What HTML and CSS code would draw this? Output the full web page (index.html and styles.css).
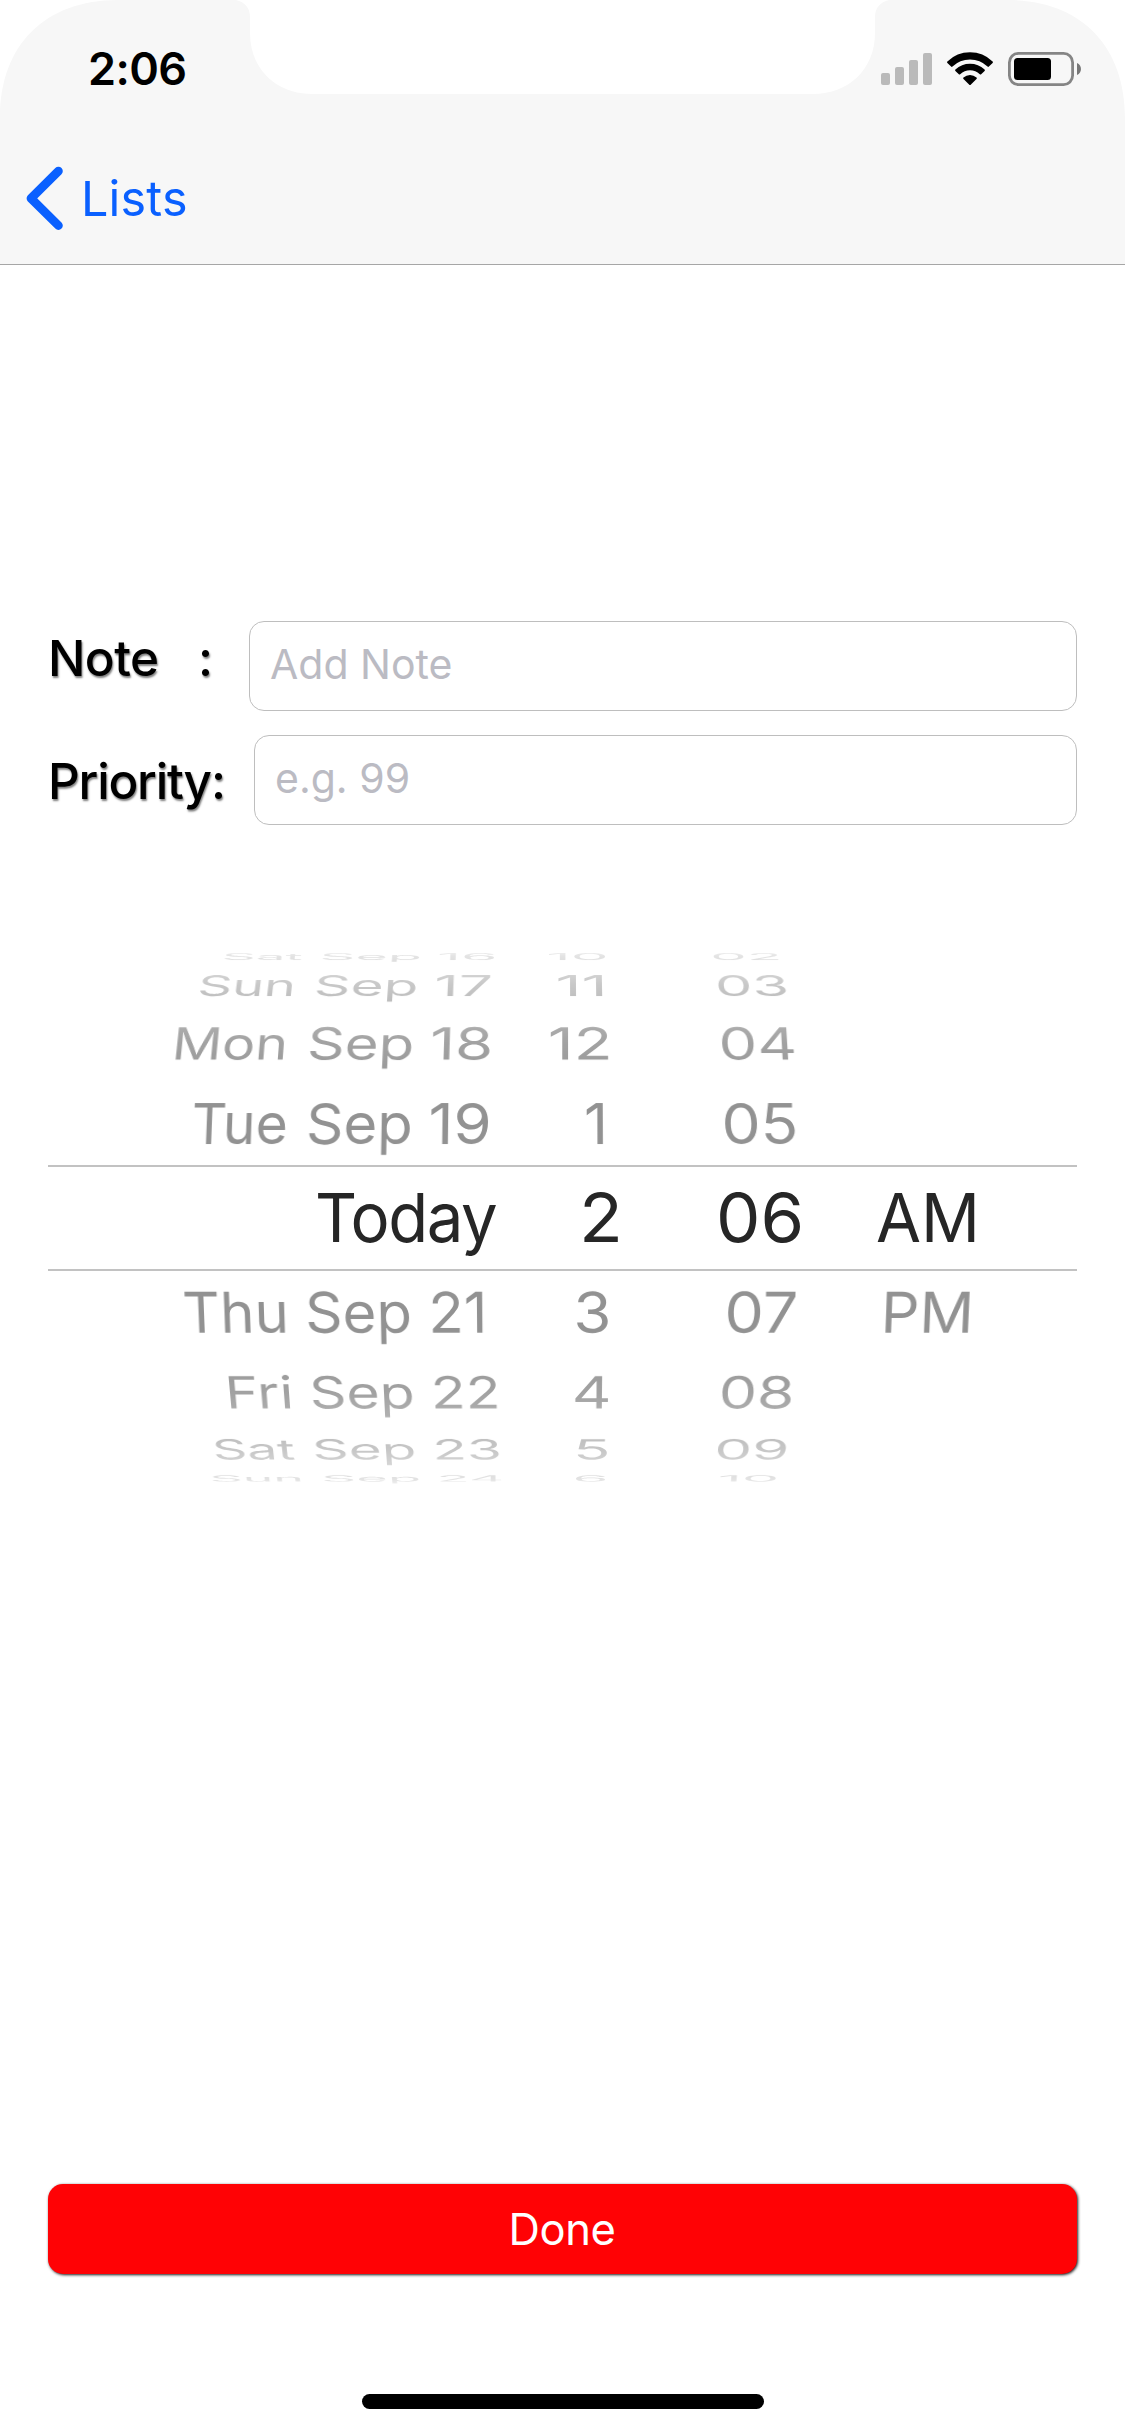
FILE: index.html
```html
<!DOCTYPE html>
<html lang="en">
<head>
<meta charset="utf-8">
<title>Add Note</title>
<link rel="stylesheet" href="styles.css">
</head>
<body>
<div class="screen">
  <header class="header">
    <svg class="header-shape" width="1125" height="264" viewBox="0 0 1125 264" aria-hidden="true">
      <path fill="#f7f7f7" d="M0 118C0 45 45 0 118 0H236C245 2 250 8 250 17V33C250 69 276 94 312 94H813C849 94 875 69 875 33V17C875 8 880 2 889 0H1007C1080 0 1125 45 1125 118V264H0Z"/>
    </svg>
    <div class="status-bar">
      <span class="clock">2:06</span>
      <div class="status-icons">
        <svg width="51" height="32" viewBox="0 0 51 32" fill="#bababa" aria-hidden="true">
          <rect x="0" y="20" width="9" height="12" rx="2"/>
          <rect x="14" y="14" width="9" height="18" rx="2"/>
          <rect x="28" y="7" width="9" height="25" rx="2"/>
          <rect x="42" y="0" width="9" height="32" rx="2"/>
        </svg>
        <svg class="wifi" width="46" height="33" viewBox="0 0 46 33" aria-hidden="true">
          <g fill="#000" stroke="#000" stroke-width="2" stroke-linejoin="round">
            <path d="M1.1 10.2A31.5 31.5 0 0 1 44.9 10.2L41.2 13.9A26.4 26.4 0 0 0 4.8 13.9Z"/>
            <path d="M9.1 18.2A20.4 20.4 0 0 1 36.9 18.2L33.5 21.4A15.4 15.4 0 0 0 12.5 21.4Z"/>
            <path d="M17.2 26.3A8.6 8.6 0 0 1 28.8 26.3L23 32Z"/>
          </g>
        </svg>
        <svg class="battery" width="73" height="34" viewBox="0 0 73 34" aria-hidden="true">
          <rect x="1.4" y="1.4" width="63.2" height="31.2" rx="9" fill="none" stroke="#858585" stroke-width="2.8"/>
          <rect x="6" y="6" width="37" height="22" rx="3.5" fill="#000"/>
          <path d="M69 11C74.3 13 74.3 21 69 23Z" fill="#777"/>
        </svg>
      </div>
    </div>
    <nav class="nav-bar">
      <a class="back">
        <svg width="38" height="64" viewBox="0 0 38 64" aria-hidden="true">
          <path d="M33.4 5.1L6 32.3L33.4 59.5" fill="none" stroke="#0a60ff" stroke-width="8.8" stroke-linecap="round" stroke-linejoin="round"/>
        </svg>
        <span>Lists</span>
      </a>
    </nav>
  </header>

  <main class="content">
    <form class="form">
      <div class="field note">
        <label for="note"><span class="label-text">Note</span><span>:</span></label>
        <input id="note" type="text" placeholder="Add Note">
      </div>
      <div class="field priority">
        <label for="priority">Priority:</label>
        <input id="priority" type="text" placeholder="e.g. 99">
      </div>
    </form>

    <section class="picker">
      <div class="row up4"><span><i>Sat</i> Sep <b>16</b></span><span>10</span><span>02</span></div>
      <div class="row up3"><span><i>Sun</i> Sep <b>17</b></span><span>11</span><span>03</span></div>
      <div class="row up2"><span><i>Mon</i> Sep <b>18</b></span><span>12</span><span>04</span></div>
      <div class="row up1"><span><i>Tue</i> Sep <b>19</b></span><span>1</span><span>05</span></div>
      <div class="row selected"><span>Today</span><span>2</span><span>06</span><span>AM</span></div>
      <div class="row down1"><span>Thu Sep 21</span><span>3</span><span>07</span><span>PM</span></div>
      <div class="row down2"><span>Fri Sep 22</span><span>4</span><span>08</span></div>
      <div class="row down3"><span><i>Sat</i> Sep 23</span><span>5</span><span>09</span></div>
      <div class="row down4"><span><i>Sun</i> Sep 24</span><span>6</span><span>10</span></div>
    </section>
  </main>

  <footer class="footer">
    <button class="done" type="button">Done</button>
    <div class="home-indicator"></div>
  </footer>
</div>
</body>
</html>
```
FILE: styles.css
```css
* {
  box-sizing: border-box;
}

body {
  margin: 0;
  background: #fff;
  font-family: Inter, "Liberation Sans", sans-serif;
}

.screen {
  display: flex;
  flex-direction: column;
  width: 1125px;
  height: 2436px;
  overflow: hidden;
}

/* Header */
.header {
  position: relative;
  height: 265px;
  border-bottom: 1px solid #a6a6a6;
}

.header-shape {
  position: absolute;
  top: 0;
  left: 0;
}

.status-bar,
.nav-bar {
  position: relative;
  display: flex;
  height: 132px;
}

.status-bar {
  justify-content: space-between;
  padding: 52px 44px 0 88px;
}

.clock {
  font-size: 45px;
  font-weight: 600;
  line-height: 34px;
  letter-spacing: -0.6px;
}

.status-icons {
  display: flex;
  align-items: flex-start;
}

.status-icons svg:first-child {
  margin-top: 1px;
}

.wifi {
  margin-left: 15px;
}

.battery {
  margin-left: 15px;
}

.back {
  display: flex;
  align-items: center;
  padding-left: 25px;
  color: #0a60ff;
  font-size: 48.5px;
}

.back span {
  margin-left: 18px;
  letter-spacing: 0.2px;
}

/* Form */
.content {
  padding: 356px 48px 0;
}

.form {
  display: flex;
  flex-direction: column;
  gap: 24px;
}

.field {
  display: flex;
  align-items: center;
  height: 90px;
}

.field label {
  display: flex;
  flex: none;
  font-size: 49.5px;
  font-weight: 450;
  line-height: 60px;
  letter-spacing: -1.2px;
  text-shadow: 1px 2px 2px rgba(0, 0, 0, 0.5);
}

.note label {
  width: 201px;
  margin-bottom: 17px;
  letter-spacing: -0.6px;
}

.label-text {
  width: 150px;
}

.priority label {
  width: 206px;
  margin-top: 1px;
}

.field input {
  flex: 1;
  min-width: 0;
  height: 90px;
  padding: 0 20px 4px;
  border: 1px solid #bebebe;
  border-radius: 15px;
  background: #fff;
  font: 41px Inter, "Liberation Sans", sans-serif;
  letter-spacing: 0;
}

.field input::placeholder {
  color: #bbbbc3;
  opacity: 1;
}

/* Date and time wheel */
.picker {
  margin-top: 121px;
  color: #929292;
  font-size: 57px;
  -webkit-mask-image: linear-gradient(transparent 0, rgba(0, 0, 0, 0.25) 10px, rgba(0, 0, 0, 0.5) 38px, rgba(0, 0, 0, 0.85) 96px, #000 150px, #000 394px, rgba(0, 0, 0, 0.85) 448px, rgba(0, 0, 0, 0.5) 506px, rgba(0, 0, 0, 0.25) 534px, transparent 544px);
  mask-image: linear-gradient(transparent 0, rgba(0, 0, 0, 0.25) 10px, rgba(0, 0, 0, 0.5) 38px, rgba(0, 0, 0, 0.85) 96px, #000 150px, #000 394px, rgba(0, 0, 0, 0.85) 448px, rgba(0, 0, 0, 0.5) 506px, rgba(0, 0, 0, 0.25) 534px, transparent 544px);
}

.row {
  display: grid;
  grid-template-columns: 370px 170px 160px 180px;
  grid-template-rows: 100%;
  align-items: center;
  padding-left: 122px;
  transform-origin: 512px 50%;
}

.row span {
  line-height: 1;
  white-space: nowrap;
  transform-origin: 0 50%;
  transform: translateX(var(--x)) scale(var(--sx), var(--sy, 1));
}

.row i,
.row b {
  display: inline-block;
  font-style: normal;
  font-weight: 400;
}

.row i {
  margin-right: -3px;
  transform: scaleX(0.95);
  transform-origin: 0 50%;
}

.row b {
  margin-left: 3px;
  transform: scaleX(1.06);
  transform-origin: 100% 50%;
}

.up4 { height: 20.8px; --sy: 0.152; transform: matrix3d(1, 0, 0, 0, 0, 1, 0, -0.0005, 0, 0, 1, 0, 0, 0, 0, 1); }
.up3 { height: 36.8px; --sy: 0.49; transform: matrix3d(1, 0, 0, 0, 0, 1, 0, -0.0004, 0, 0, 1, 0, 0, 0, 0, 1); }
.up2 { height: 78.2px; --sy: 0.78; transform: matrix3d(1, 0, 0, 0, 0, 1, 0, -0.00027, 0, 0, 1, 0, 0, 0, 0, 1); }
.up1 { height: 83.2px; --sy: 0.985; transform: matrix3d(1, 0, 0, 0, 0, 1, 0, -0.00011, 0, 0, 1, 0, 0, 0, 0, 1); }
.down1 { height: 82px; --sy: 0.985; transform: matrix3d(1, 0, 0, 0, 0, 1, 0, 0.00011, 0, 0, 1, 0, 0, 0, 0, 1); }
.down2 { height: 79.4px; --sy: 0.78; transform: matrix3d(1, 0, 0, 0, 0, 1, 0, 0.00027, 0, 0, 1, 0, 0, 0, 0, 1); }
.down3 { height: 35.8px; --sy: 0.49; transform: matrix3d(1, 0, 0, 0, 0, 1, 0, 0.0004, 0, 0, 1, 0, 0, 0, 0, 1); }
.down4 { height: 21.6px; --sy: 0.152; transform: matrix3d(1, 0, 0, 0, 0, 1, 0, 0.0005, 0, 0, 1, 0, 0, 0, 0, 1); }

.selected {
  height: 106px;
  padding-bottom: 2px;
  border-top: 2px solid #c2c2c2;
  border-bottom: 2px solid #c2c2c2;
  color: #262626;
  font-size: 68px;
}

.selected span:nth-child(1) { --x: 145px; --sx: 0.96; letter-spacing: -1.5px; }
.selected span:nth-child(2) { --x: 39px; --sx: 1.06; }
.selected span:nth-child(3) { --x: 6.1px; --sx: 1.036; }
.selected span:nth-child(4) { --x: 6px; --sx: 0.96; }

.up4 span:nth-child(1) { --x: 52.1px; --sx: 0.975; }
.up4 span:nth-child(2) { --x: 6.2px; --sx: 1.055; }
.up4 span:nth-child(3) { --x: 0.3px; --sx: 1.016; }

.up3 span:nth-child(1) { --x: 28px; --sx: 0.994; }
.up3 span:nth-child(2) { --x: 15.4px; --sx: 1.127; }
.up3 span:nth-child(3) { --x: 4.9px; --sx: 1.04; }

.up2 span:nth-child(1) { --x: 2.5px; --sx: 1.02; }
.up2 span:nth-child(2) { --x: 7.8px; --sx: 1.115; }
.up2 span:nth-child(3) { --x: 8.5px; --sx: 1.075; }

.up1 span:nth-child(1) { --x: 21.5px; --sx: 1.019; }
.up1 span:nth-child(2) { --x: 44px; --sx: 1.035; }
.up1 span:nth-child(3) { --x: 11.4px; --sx: 1.09; }

.down1 span:nth-child(1) { --x: 12.5px; --sx: 1.02; }
.down1 span:nth-child(2) { --x: 33.4px; --sx: 1.08; }
.down1 span:nth-child(3) { --x: 14.5px; --sx: 1.095; }
.down1 span:nth-child(4) { --x: 10.9px; --sx: 1.06; }

.down2 span:nth-child(1) { --x: 55px; --sx: 1.004; }
.down2 span:nth-child(2) { --x: 31.8px; --sx: 1.08; }
.down2 span:nth-child(3) { --x: 8.8px; --sx: 1.066; }

.down3 span:nth-child(1) { --x: 42.4px; --sx: 0.995; }
.down3 span:nth-child(2) { --x: 33.1px; --sx: 1.08; }
.down3 span:nth-child(3) { --x: 4.4px; --sx: 1.05; }

.down4 span:nth-child(1) { --x: 39.5px; --sx: 0.955; }
.down4 span:nth-child(2) { --x: 32.5px; --sx: 1.02; }
.down4 span:nth-child(3) { --x: 7.7px; --sx: 1.04; }

/* Footer */
.footer {
  display: flex;
  flex-direction: column;
  align-items: center;
  margin-top: auto;
  padding: 0 48px 27px;
}

.done {
  width: 100%;
  height: 90px;
  padding: 0 1px 1px 0;
  border: 0;
  border-radius: 15px;
  background: #ff0205;
  box-shadow: 1px 1px 3px rgba(0, 0, 0, 0.9);
  color: #fff;
  font: 43.5px Inter, "Liberation Sans", sans-serif;
  letter-spacing: -0.4px;
}

.home-indicator {
  width: 402px;
  height: 15px;
  margin-top: 120px;
  border-radius: 8px;
  background: #000;
}
```
